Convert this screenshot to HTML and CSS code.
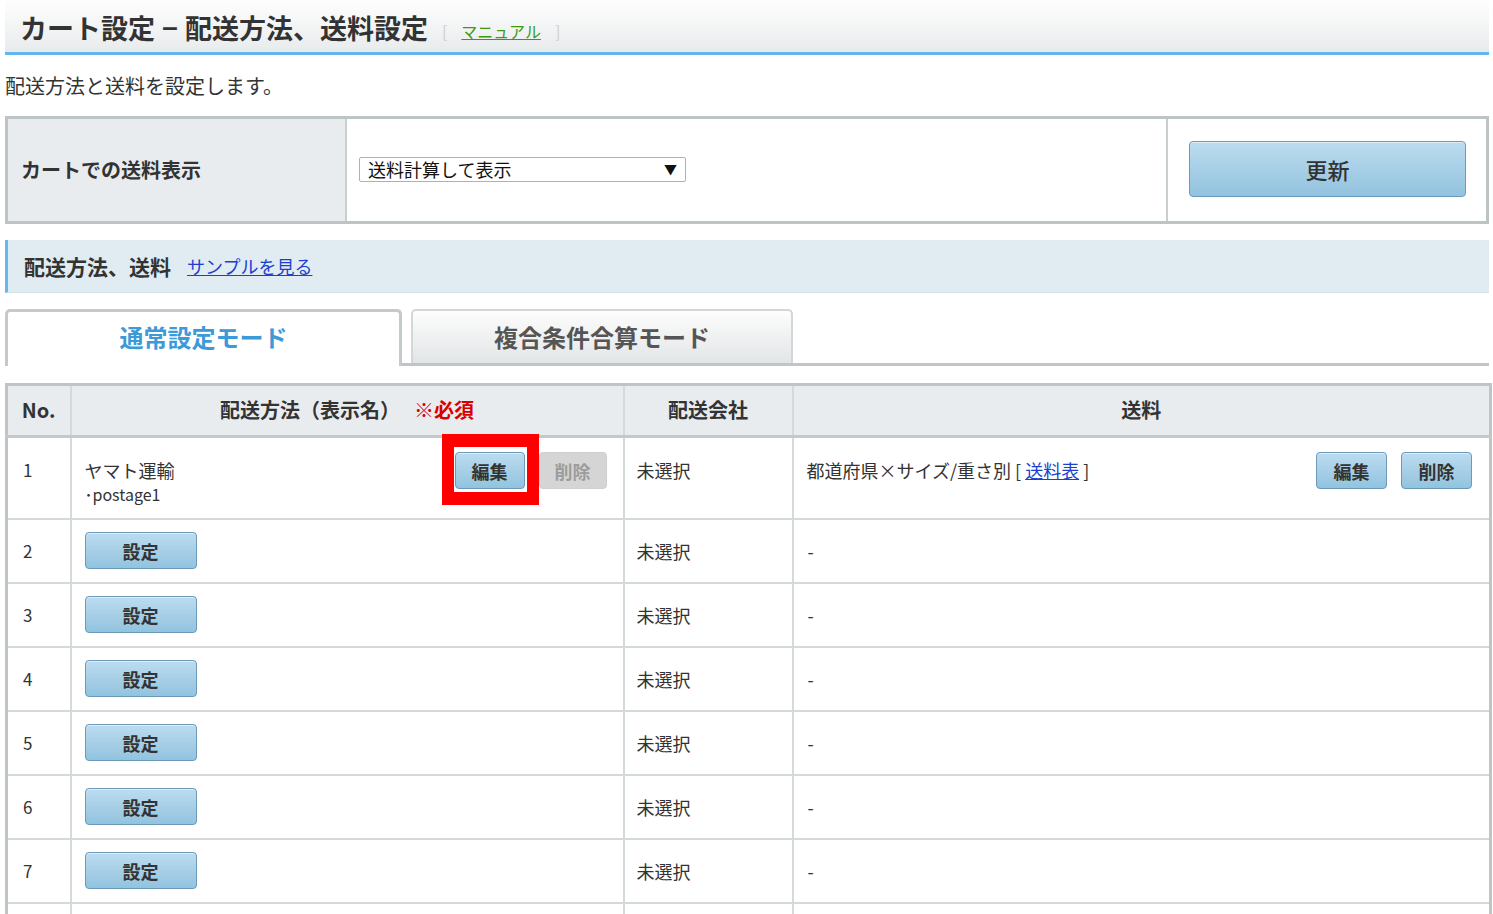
FILE: index.html
```html
<!DOCTYPE html>
<html lang="ja">
<head>
<meta charset="utf-8">
<title>カート設定 - 配送方法、送料設定</title>
<link rel="stylesheet" href="styles.css">
</head>
<body>
<div class="page">
  <header class="page-header">
    <h1 class="page-title">カート設定<span class="sep">−</span>配送方法、送料設定</h1>
    <span class="manual">[<a href="#">マニュアル</a>]</span>
  </header>
  <p class="lead">配送方法と送料を設定します。</p>

  <div class="cart-setting">
    <div class="cs-label">カートでの送料表示</div>
    <div class="cs-field">
      <div class="select-wrap">
        <select class="select">
          <option>送料計算して表示</option>
        </select>
      </div>
    </div>
    <div class="cs-action">
      <button class="btn btn-update" type="button">更新</button>
    </div>
  </div>

  <div class="section-head">
    <span>配送方法、送料</span>
    <a href="#">サンプルを見る</a>
  </div>

  <div class="tabs">
    <div class="tab tab-active">通常設定モード</div>
    <div class="tab tab-inactive">複合条件合算モード</div>
  </div>

  <table class="ship-table">
    <colgroup>
      <col class="c-no">
      <col class="c-method">
      <col class="c-company">
      <col class="c-fee">
    </colgroup>
    <thead>
      <tr>
        <th>No.</th>
        <th>配送方法（表示名）<span class="req">※必須</span></th>
        <th>配送会社</th>
        <th>送料</th>
      </tr>
    </thead>
    <tbody>
      <tr class="row-first">
        <td class="no">1</td>
        <td>
          <div class="method">
            <div class="method-name">
              <div class="name">ヤマト運輸</div>
              <div class="code">･postage1</div>
            </div>
            <div class="btns">
              <span class="mark"><button class="btn btn-sm" type="button">編集</button></span>
              <button class="btn btn-sm btn-disabled" type="button">削除</button>
            </div>
          </div>
        </td>
        <td class="company">未選択</td>
        <td>
          <div class="fee">
            <div class="fee-text">都道府県×サイズ/重さ別 [ <a href="#">送料表</a> ]</div>
            <div class="btns">
              <button class="btn btn-sm" type="button">編集</button>
              <button class="btn btn-sm" type="button">削除</button>
            </div>
          </div>
        </td>
      </tr>
      <tr><td class="no">2</td><td><button class="btn btn-set" type="button">設定</button></td><td class="company">未選択</td><td class="dash">-</td></tr>
      <tr><td class="no">3</td><td><button class="btn btn-set" type="button">設定</button></td><td class="company">未選択</td><td class="dash">-</td></tr>
      <tr><td class="no">4</td><td><button class="btn btn-set" type="button">設定</button></td><td class="company">未選択</td><td class="dash">-</td></tr>
      <tr><td class="no">5</td><td><button class="btn btn-set" type="button">設定</button></td><td class="company">未選択</td><td class="dash">-</td></tr>
      <tr><td class="no">6</td><td><button class="btn btn-set" type="button">設定</button></td><td class="company">未選択</td><td class="dash">-</td></tr>
      <tr><td class="no">7</td><td><button class="btn btn-set" type="button">設定</button></td><td class="company">未選択</td><td class="dash">-</td></tr>
      <tr class="row-more"><td></td><td></td><td></td><td></td></tr>
    </tbody>
  </table>
</div>
</body>
</html>
```

FILE: styles.css
```css
* { box-sizing: border-box; }

body {
  margin: 0;
  background: #fff;
  color: #333;
  font-family: "Noto Sans CJK JP", "Noto Sans", sans-serif;
}

.page {
  padding: 0 4px 0 5px;
}

/* header */
.page-header {
  height: 55px;
  border-bottom: 3px solid #63b6ec;
  background: linear-gradient(to bottom, #fefefe, #e8ebec);
  display: flex;
  align-items: center;
  gap: 14px;
  padding: 3px 0 0 15px;
}
.page-title {
  margin: 0;
  font-size: 27px;
  line-height: 1;
  font-weight: bold;
  color: #333;
}
.sep {
  margin: 0 7px;
}
.manual {
  font-size: 16px;
  color: #cfcfcf;
  padding-top: 6px;
}
.manual a {
  color: #3d9b10;
  margin: 0 14px;
}

.lead {
  margin: 0;
  height: 61px;
  padding-top: 21px;
  font-size: 20px;
  line-height: 20px;
}

/* cart setting */
.cart-setting {
  display: flex;
  height: 108px;
  border: 3px solid #bdc4c5;
}
.cs-label {
  width: 339px;
  background: #e9ecee;
  border-right: 2px solid #c9cecf;
  display: flex;
  align-items: center;
  padding: 0 0 2px 13px;
  font-size: 20px;
  font-weight: bold;
}
.cs-field {
  width: 821px;
  border-right: 2px solid #c9cecf;
  display: flex;
  align-items: center;
  padding: 0 0 2px 12px;
}
.select-wrap {
  position: relative;
  width: 327px;
  height: 25px;
}
.select-wrap::after {
  content: "▼";
  position: absolute;
  right: 9px;
  top: 3px;
  font-size: 13px;
  line-height: 18px;
  color: #111;
  pointer-events: none;
}
.select {
  appearance: none;
  -webkit-appearance: none;
  width: 100%;
  height: 25px;
  border: 1px solid #b0b0b0;
  border-radius: 2px;
  background: #fff;
  font-family: inherit;
  font-size: 18px;
  line-height: 22px;
  padding: 0 0 0 8px;
  color: #111;
}
.cs-action {
  flex: 1;
  display: flex;
  align-items: center;
  padding: 0 0 2px 21px;
}

/* buttons */
.btn {
  font-family: inherit;
  color: #333;
  font-weight: bold;
  border: 1px solid #6b9abb;
  border-radius: 4px;
  background: linear-gradient(to bottom, #bcdcf0, #92c3de);
  box-shadow: inset 0 1px 0 rgba(255,255,255,0.5);
  padding: 0;
  cursor: pointer;
}
.btn-update {
  width: 277px;
  height: 56px;
  font-size: 22px;
  font-weight: 500;
}
.btn-sm {
  width: 70px;
  height: 37px;
  font-size: 18px;
}
.btn-set {
  width: 112px;
  height: 37px;
  font-size: 18px;
}
.btn-disabled {
  background: #d5d5d5;
  border-color: #cfcfcf;
  color: #9c9c9c;
  box-shadow: none;
  width: 68px;
}

/* section head */
.section-head {
  margin-top: 16px;
  height: 53px;
  background: #e1ecf2;
  border-left: 3px solid #62b9ef;
  border-bottom: 1px solid #d3e5eb;
  display: flex;
  align-items: center;
  gap: 16px;
  padding-left: 16px;
  font-size: 21px;
  font-weight: bold;
}
.section-head a {
  font-weight: normal;
  font-size: 18px;
  color: #1d3fcf;
}

/* tabs */
.tabs {
  margin-top: 16px;
  height: 57px;
  display: flex;
  align-items: flex-end;
  gap: 9px;
  border-bottom: 3px solid #c0c6c7;
}
.tab {
  display: flex;
  align-items: center;
  justify-content: center;
  font-size: 24px;
  font-weight: bold;
  border-radius: 5px 5px 0 0;
}
.tab-active {
  width: 397px;
  height: 57px;
  margin-bottom: -3px;
  background: #fff;
  border: 3px solid #c4cacb;
  border-bottom: none;
  color: #3d9ad9;
  padding-bottom: 5px;
}
.tab-inactive {
  width: 382px;
  height: 54px;
  background: linear-gradient(to bottom, #fdfdfd, #e2e5e6);
  border: 2px solid #d3d7d8;
  border-bottom: none;
  color: #555;
  padding-bottom: 1px;
}

/* table */
.ship-table {
  margin-top: 17px;
  width: 100%;
  border-collapse: collapse;
  border: 3px solid #bfc5c6;
  table-layout: fixed;
}
.c-no { width: 64px; }
.c-method { width: 553px; }
.c-company { width: 169px; }
.c-fee { width: 698px; }

.ship-table th,
.ship-table td {
  border: 2px solid #d4d9da;
  text-align: left;
  font-size: 18px;
  line-height: 18px;
}
.ship-table th {
  background: #e9ecee;
  height: 52px;
  text-align: center;
  font-size: 20px;
  line-height: 20px;
  border-bottom: 3px solid #c3c9ca;
  padding: 0 0 2px;
}
.req {
  color: #d90000;
  margin-left: 14px;
}
.ship-table td {
  height: 64px;
  padding: 0 0 0 13px;
  vertical-align: middle;
}
.ship-table td.no {
  padding-left: 15px;
  font-size: 17px;
}
.ship-table td.company {
  padding-left: 12px;
}
.ship-table td.dash {
  padding-left: 14px;
}

.row-first td {
  height: 82px;
  vertical-align: top;
  padding-top: 23px;
}
.row-first td:nth-child(2),
.row-first td:nth-child(4) {
  padding-top: 14px;
}
.method,
.fee {
  display: flex;
  justify-content: space-between;
  align-items: flex-start;
}
.method {
  padding-right: 16px;
}
.fee {
  padding-right: 17px;
}
.method-name {
  padding-top: 9px;
}
.method-name .code {
  font-size: 16px;
  line-height: 16px;
  margin-top: 7px;
}
.fee-text {
  padding-top: 9px;
}
.fee-text a {
  color: #1d3fcf;
}
.btns {
  display: flex;
  gap: 14px;
}
.fee .btn-sm {
  width: 71px;
}
.mark {
  position: relative;
  display: inline-block;
}
.mark::after {
  content: "";
  position: absolute;
  left: -13px;
  right: -14px;
  top: -18px;
  bottom: -16px;
  border: 12px solid #ff0000;
  border-top-width: 13px;
  border-bottom-width: 13px;
  pointer-events: none;
}
```
